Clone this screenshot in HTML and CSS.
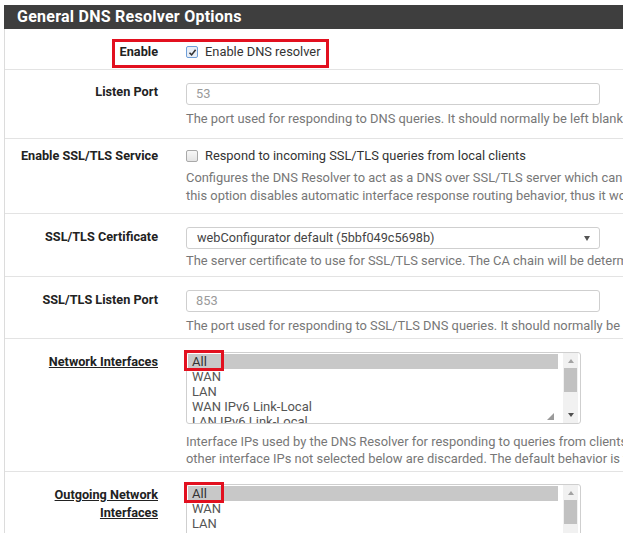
FILE: index.html
```html
<!DOCTYPE html>
<html>
<head>
<meta charset="utf-8">
<link rel="stylesheet" href="styles.css">
</head>
<body>
<div class="panel">
  <div class="panel-heading">General DNS Resolver Options</div>

  <div class="row r-enable">
    <div class="lbl">Enable</div>
    <div class="field">
      <div class="check"><span class="cb cb-on"><svg width="9" height="9" viewBox="0 0 9 9"><path d="M1.5 4.8 L3.6 6.9 L7.6 1.8" fill="none" stroke="#333" stroke-width="1.6"/></svg></span>Enable DNS resolver</div>
    </div>
    <div class="mark mark-enable"></div>
  </div>

  <div class="row r-input">
    <div class="lbl">Listen Port</div>
    <div class="field">
      <div class="input ph">53</div>
      <div class="help">The port used for responding to DNS queries. It should normally be left blank unless another service needs to bind to TCP/UDP port 53.</div>
    </div>
  </div>

  <div class="row r-check">
    <div class="lbl">Enable SSL/TLS Service</div>
    <div class="field">
      <div class="check"><span class="cb"></span>Respond to incoming SSL/TLS queries from local clients</div>
      <div class="help help-wrap">Configures the DNS Resolver to act as a DNS over SSL/TLS server which can answer queries from clients which also support DNS over TLS. Activating<br>this option disables automatic interface response routing behavior, thus it works best with specific interface bindings.</div>
    </div>
  </div>

  <div class="row r-select">
    <div class="lbl">SSL/TLS Certificate</div>
    <div class="field">
      <div class="input select">webConfigurator default (5bbf049c5698b)<span class="caret"></span></div>
      <div class="help">The server certificate to use for SSL/TLS service. The CA chain will be determined automatically.</div>
    </div>
  </div>

  <div class="row r-input2">
    <div class="lbl">SSL/TLS Listen Port</div>
    <div class="field">
      <div class="input ph">853</div>
      <div class="help">The port used for responding to SSL/TLS DNS queries. It should normally be left blank unless another service needs to bind to TCP/UDP port 853.</div>
    </div>
  </div>

  <div class="row r-list">
    <div class="lbl"><span class="ul">Network Interfaces</span></div>
    <div class="field">
      <div class="listbox">
        <div class="items">
          <div class="item sel">All</div>
          <div class="item">WAN</div>
          <div class="item">LAN</div>
          <div class="item">WAN IPv6 Link-Local</div>
          <div class="item">LAN IPv6 Link-Local</div>
        </div>
        <div class="sbar">
          <span class="arr up"></span>
          <span class="thumb"></span>
          <span class="arr down"></span>
        </div>
        <span class="grip"></span>
        <div class="mark mark-all"></div>
      </div>
      <div class="help help-list">Interface IPs used by the DNS Resolver for responding to queries from clients. If an interface has both IPv4 and IPv6 IPs, both are used. Queries to<br>other interface IPs not selected below are discarded. The default behavior is to respond to queries on every available IPv4 and IPv6 address.</div>
    </div>
  </div>

  <div class="row r-list2">
    <div class="lbl lbl2"><span class="ul">Outgoing Network</span><br><span class="ul">Interfaces</span></div>
    <div class="field">
      <div class="listbox">
        <div class="items">
          <div class="item sel">All</div>
          <div class="item">WAN</div>
          <div class="item">LAN</div>
          <div class="item">WAN IPv6 Link-Local</div>
          <div class="item">LAN IPv6 Link-Local</div>
        </div>
        <div class="sbar">
          <span class="arr up"></span>
          <span class="thumb"></span>
          <span class="arr down"></span>
        </div>
        <div class="mark mark-all"></div>
      </div>
    </div>
  </div>
</div>
</body>
</html>
```

FILE: styles.css
```css
html, body {
  margin: 0;
  padding: 0;
  background: #ffffff;
  overflow: hidden;
}
body {
  font-family: Roboto, "Liberation Sans", sans-serif;
  font-size: 12.85px;
  color: #333;
  width: 623px;
  height: 533px;
}
.panel {
  margin: 5px 0 0 4px;
  width: 1000px;
  border-left: 1px solid #dcdcdc;
}
.panel-heading {
  background: #3e3e3e;
  color: #fff;
  font-weight: bold;
  font-size: 16px;
  letter-spacing: 0.25px;
  height: 24px;
  line-height: 24px;
  padding-left: 13px;
  margin-left: -1px;
}
.row {
  position: relative;
  display: grid;
  grid-template-columns: 153px 1fr;
  column-gap: 28px;
  border-bottom: 1px solid #e3e3e3;
}
.lbl {
  text-align: right;
  font-weight: bold;
  font-size: 12.7px;
  line-height: 18px;
  color: #222;
  white-space: nowrap;
}
.ul {
  text-decoration: underline;
}
.field {
  line-height: 18px;
  white-space: nowrap;
}
.help {
  color: #777;
  font-size: 12.9px;
  line-height: 18px;
}
.check {
  display: flex;
  align-items: center;
  color: #333;
}
.cb {
  display: inline-flex;
  align-items: center;
  justify-content: center;
  width: 10px;
  height: 10px;
  border: 1px solid #a9a9a9;
  border-radius: 2px;
  background: linear-gradient(#f8f8f8, #e4e4e4);
  margin-right: 7px;
}
.cb-on {
  border-color: #6f9fd8;
  background: #e8eef6;
}
.input {
  position: relative;
  box-sizing: border-box;
  width: 414px;
  height: 22px;
  border: 1px solid #cfcfcf;
  border-radius: 3px;
  padding-left: 9px;
  line-height: 20px;
  color: #555;
  background: #fff;
}
.ph {
  color: #9a9a9a;
}
.select {
  padding-left: 10px;
  color: #444;
  font-size: 12.7px;
}
.caret {
  position: absolute;
  right: 9px;
  top: 8px;
  width: 0;
  height: 0;
  border-left: 3px solid transparent;
  border-right: 3px solid transparent;
  border-top: 5px solid #555;
}

/* row sizing */
.r-enable { padding: 14px 0 8px; }
.r-input { padding: 13px 0 10px; }
.r-input .lbl { line-height: 18px; }
.r-input .help { margin-top: 5px; }
.r-check { padding: 8px 0 8px; }
.r-check .help { margin-top: 4px; }
.r-select { padding: 13px 0 6px; }
.r-select .lbl { line-height: 20px; }
.r-select .help { margin-top: 3px; }
.r-input2 { padding: 13px 0 3px; }
.r-input2 .lbl { line-height: 20px; }
.r-input2 .help { margin-top: 5px; }
.r-list { padding: 13px 0 4px; }
.r-list .lbl { padding-top: 1px; }
.r-list .help { margin-top: 9px; line-height: 17px; }
.r-list2 { padding: 12px 0 0; border-bottom: none; }
.r-list2 .lbl { line-height: 18px; padding-top: 2px; }

/* listbox */
.listbox {
  position: relative;
  box-sizing: border-box;
  width: 395px;
  height: 72px;
  border: 1px solid #cfcfcf;
  border-radius: 3px;
  display: flex;
  background: #fff;
}
.items {
  flex: 1;
  overflow: hidden;
  padding: 1px 5px 0 1px;
}
.item {
  font-size: 13px;
  line-height: 15px;
  padding-left: 4px;
  color: #555;
}
.item.sel {
  background: #c8c8c8;
  color: #333;
}
.sbar {
  width: 15px;
  background: #f1f1f1;
  display: flex;
  flex-direction: column;
  align-items: center;
  margin-right: 2px;
}
.arr {
  width: 0;
  height: 0;
  border-left: 3px solid transparent;
  border-right: 3px solid transparent;
}
.arr.up {
  border-bottom: 4px solid #a3a3a3;
  margin-top: 6px;
}
.arr.down {
  border-top: 4px solid #505050;
  margin-top: auto;
  margin-bottom: 6px;
}
.thumb {
  width: 13px;
  height: 24px;
  background: #c1c1c1;
  margin-top: 5px;
}
.grip {
  position: absolute;
  right: 26px;
  bottom: 3px;
  width: 0;
  height: 0;
  border-left: 7px solid transparent;
  border-bottom: 7px solid #9a9a9a;
}

/* red annotation boxes */
.mark {
  position: absolute;
  border: 3px solid #e2101f;
  box-sizing: border-box;
  pointer-events: none;
}
.mark-enable {
  left: 107px;
  top: 10px;
  width: 217px;
  height: 29px;
}
.mark-all {
  left: -3px;
  top: -3px;
  width: 40px;
  height: 21px;
}
```
